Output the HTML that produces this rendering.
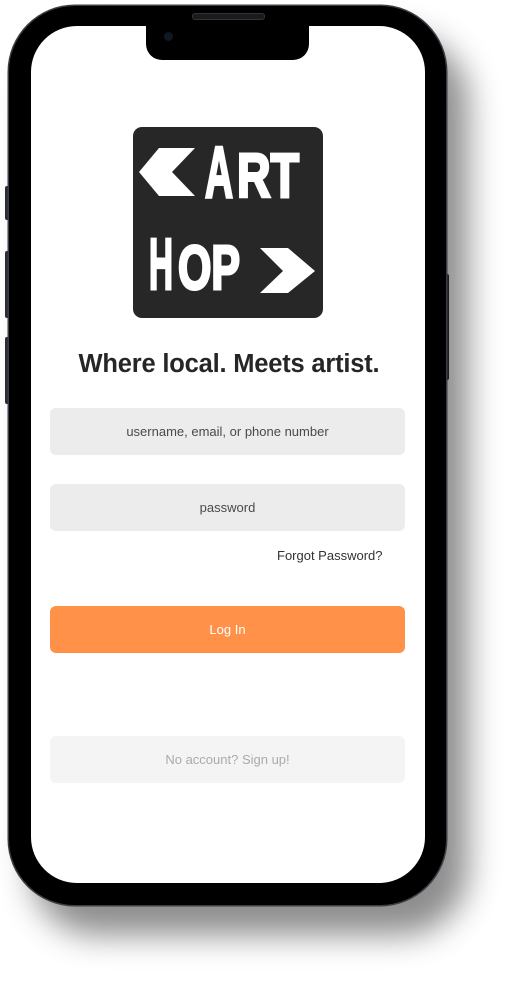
<!DOCTYPE html>
<html><head><meta charset="utf-8"><style>
html,body{margin:0;padding:0;background:#fff;}
body{width:525px;height:988px;position:relative;overflow:hidden;font-family:"Liberation Sans",sans-serif;}
.phone{position:absolute;left:9px;top:6px;width:437px;height:899px;border-radius:66px;background:#000;
 box-shadow:0 0 0 1.5px #3a3d45, 22px 30px 32px rgba(0,0,0,.45);}
.btn{position:absolute;background:#2b2e36;width:4px;border-radius:2px;}
.screen{position:absolute;left:31px;top:26px;width:394px;height:857px;border-radius:46px;background:#fff;overflow:hidden;}
.notch{position:absolute;left:146px;top:20px;width:163px;height:40px;background:#000;border-radius:0 0 16px 16px;}
.speaker{position:absolute;left:192px;top:13px;width:71px;height:5px;border-radius:3px;background:#1a1b1f;border:1px solid #333;}
.cam{position:absolute;left:164px;top:32px;width:9px;height:9px;border-radius:50%;background:#0e1822;}
.logo{position:absolute;left:133px;top:127px;width:190px;height:191px;border-radius:9px;background:#272727;}
h1{position:absolute;left:0;width:458px;top:350px;margin:0;text-align:center;font-size:25.5px;font-weight:bold;color:#262626;letter-spacing:-0.2px;}
.field{position:absolute;left:50px;width:355px;height:47px;border-radius:6px;background:#ececec;color:#4a4a4a;font-size:13px;text-align:center;line-height:47px;}
.fp{position:absolute;left:277px;top:548px;font-size:13px;color:#333;}
</style></head><body>
<div class="btn" style="left:5px;top:186px;height:34px"></div>
<div class="btn" style="left:5px;top:251px;height:67px"></div>
<div class="btn" style="left:5px;top:337px;height:67px"></div>
<div class="btn" style="left:445px;top:274px;height:106px"></div>
<div class="phone"></div>
<div class="screen"></div>
<div class="notch"></div>
<div class="speaker"></div>
<div class="cam"></div>
<div class="logo">
<svg width="190" height="191" viewBox="0 0 190 191" font-family="Liberation Sans" font-weight="bold" fill="#fff">
<polygon points="6,45 26,21 62,21 39,45 62,69 26,69"/>
<polygon points="127,121 155,121 182,144 155,166 127,166 150,144"/>
<g stroke="#fff" stroke-width="3" stroke-linejoin="miter">
<text x="72" y="70" font-size="72" textLength="28" lengthAdjust="spacingAndGlyphs">A</text>
<text x="104" y="70" font-size="62" textLength="62" lengthAdjust="spacingAndGlyphs">RT</text>
<text x="16" y="162" font-size="72" textLength="24" lengthAdjust="spacingAndGlyphs">H</text>
<text x="45" y="162" font-size="62" textLength="62" lengthAdjust="spacingAndGlyphs">OP</text>
</g>
</svg>
</div>
<h1>Where local. Meets artist.</h1>
<div class="field" style="top:408px">username, email, or phone number</div>
<div class="field" style="top:484px">password</div>
<div class="fp">Forgot Password?</div>
<div class="field" style="top:606px;background:#ff9248;color:#fff">Log In</div>
<div class="field" style="top:736px;background:#f4f4f4;color:#aaa">No account? Sign up!</div>
</body></html>
